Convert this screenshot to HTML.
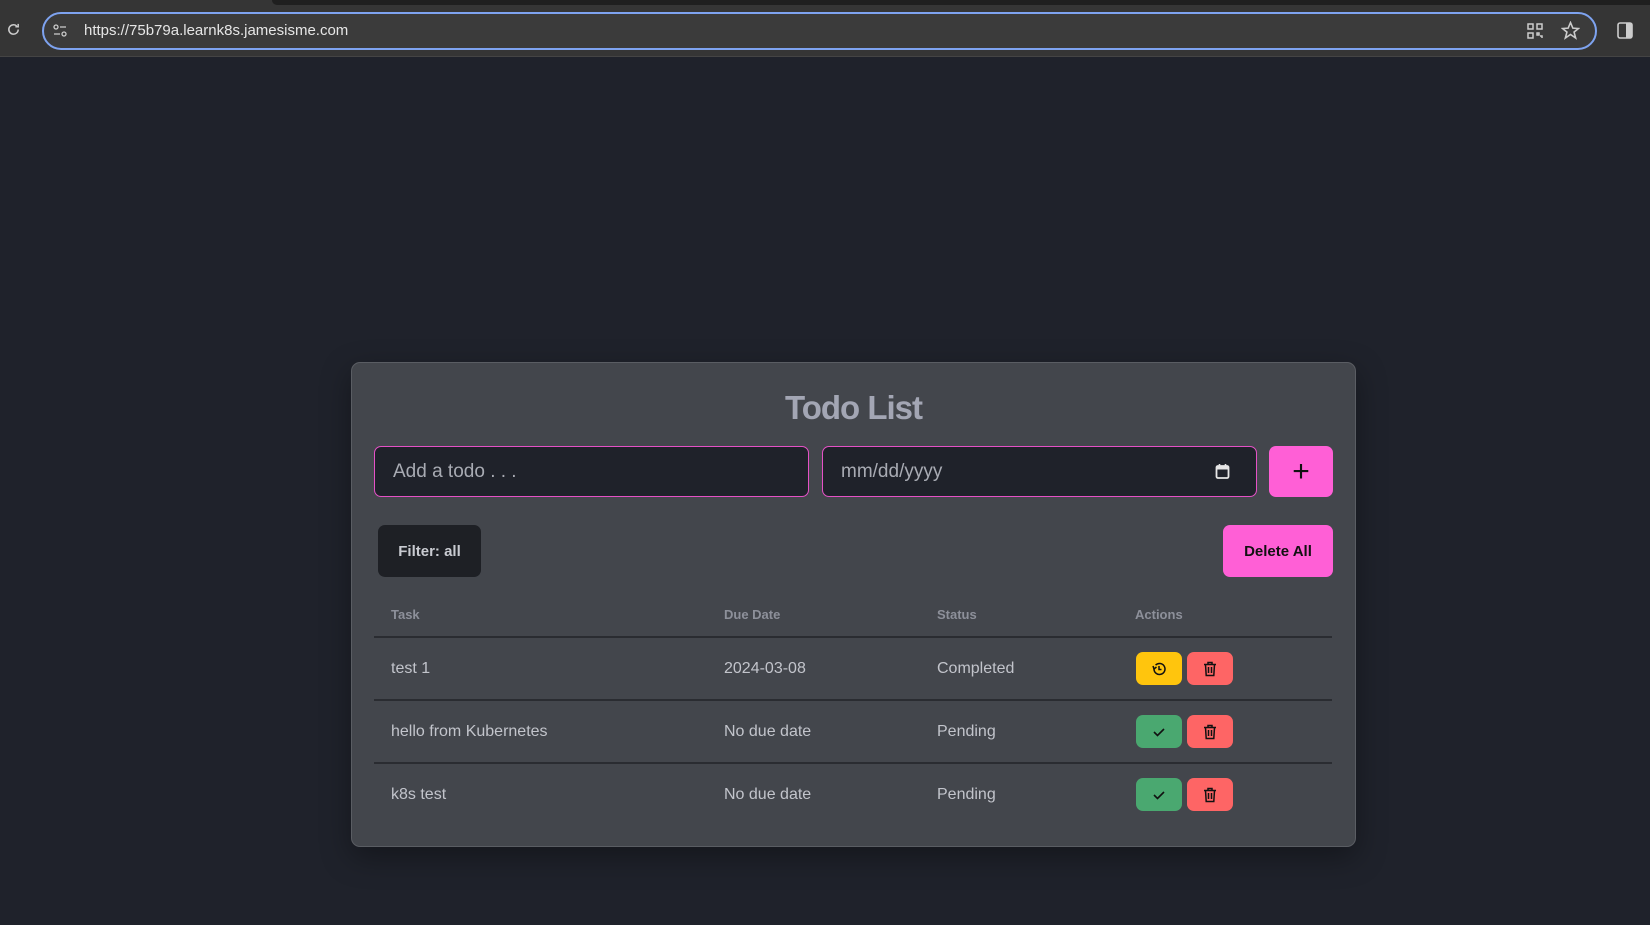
<!DOCTYPE html>
<html><head><style>
*{box-sizing:border-box;margin:0;padding:0}
body{width:1650px;height:925px;background:#1f222b;font-family:"Liberation Sans",sans-serif;position:relative;overflow:hidden}
.top{position:absolute;left:0;top:0;width:1650px;height:57px;background:#353535;border-bottom:1px solid #444}
.tab{position:absolute;left:272px;top:0;width:1378px;height:5px;background:#1f1f1f;border-bottom-left-radius:6px}
.url{position:absolute;left:42px;top:12px;width:1555px;height:38px;border:2px solid #7ea3f0;border-radius:19px;background:#3b3b3b;color:#e6e6e6;font-size:15px;line-height:34px;padding-left:40px}
.card{position:absolute;left:351px;top:362px;width:1005px;height:485px;background:#43464c;border:1px solid #5a5d63;border-radius:9px;box-shadow:0 10px 30px rgba(0,0,0,.35)}
h1{position:absolute;left:351px;width:1005px;top:389px;text-align:center;color:#a3a6b4;font-size:33px;font-weight:bold;letter-spacing:-1px}
.in{position:absolute;top:446px;height:51px;border:1.5px solid #e551c6;border-radius:7px;background:#1f222a;color:#a8abb3;font-size:19px;line-height:50px;padding-left:18px}
.btn{position:absolute;border-radius:7px;font-weight:bold;font-size:15px;display:flex;align-items:center;justify-content:center}
.pink{background:#ff5fd6;color:#111}
.th{position:absolute;top:607px;font-size:13px;font-weight:bold;color:#8d909a}
.td{position:absolute;font-size:16px;color:#c2c4cb}
.line{position:absolute;left:374px;width:958px;height:2px;background:#2a2c31}
.ab{position:absolute;width:46px;height:33px;border-radius:7px;display:flex;align-items:center;justify-content:center}
</style></head><body>
<div class="top"><div class="tab"></div>
<svg style="position:absolute;left:6px;top:22px" width="15" height="15" viewBox="0 0 16 16"><path d="M13 8a5 5 0 1 1-1.5-3.6M13 2v3h-3" fill="none" stroke="#ccc" stroke-width="1.6"/></svg>
<div class="url">https://75b79a.learnk8s.jamesisme.com</div>
<svg style="position:absolute;left:53px;top:24px" width="14" height="14" viewBox="0 0 14 14"><circle cx="3" cy="3" r="2" fill="none" stroke="#ccc" stroke-width="1.3"/><path d="M7 3h6M1 10h6" stroke="#ccc" stroke-width="1.3"/><circle cx="11" cy="10" r="2" fill="none" stroke="#ccc" stroke-width="1.3"/></svg>
<svg style="position:absolute;left:1527px;top:23px" width="16" height="16" viewBox="0 0 16 16" fill="none" stroke="#ccc" stroke-width="1.5"><rect x="1" y="1" width="5" height="5"/><rect x="10" y="1" width="5" height="5"/><rect x="1" y="10" width="5" height="5"/><path d="M10 10h2v2h-2zM13 13h2v2"/></svg>
<svg style="position:absolute;left:1561px;top:21px" width="19" height="19" viewBox="0 0 24 24"><path d="M12 2l3 7 7 .5-5.5 4.5 2 7.5L12 17l-6.5 4.5 2-7.5L2 9.5 9 9z" fill="none" stroke="#ccc" stroke-width="2"/></svg>
<svg style="position:absolute;left:1617px;top:22px" width="16" height="17" viewBox="0 0 16 17"><rect x="1" y="1" width="14" height="15" rx="2" fill="none" stroke="#ccc" stroke-width="1.6"/><rect x="9" y="1" width="6" height="15" fill="#ccc"/></svg>
</div>
<div class="card"></div>
<h1>Todo List</h1>
<div class="in" style="left:374px;width:435px">Add a todo . . .</div>
<div class="in" style="left:822px;width:435px">mm/dd/yyyy
<svg style="position:absolute;right:26px;top:16px" width="15" height="16" viewBox="0 0 15 16"><rect x="1.5" y="3" width="12" height="12" rx="1.5" fill="none" stroke="#e6e6e6" stroke-width="1.8"/><rect x="1.5" y="3" width="12" height="3.5" fill="#e6e6e6"/><path d="M4.5 1v3M10.5 1v3" stroke="#e6e6e6" stroke-width="1.6"/></svg></div>
<div class="btn pink" style="left:1269px;top:446px;width:64px;height:51px;font-size:30px;font-weight:normal">+</div>
<div class="btn" style="left:378px;top:525px;width:103px;height:52px;background:#1e2025;color:#c9cbd1">Filter: all</div>
<div class="btn pink" style="left:1223px;top:525px;width:110px;height:52px">Delete All</div>
<div class="th" style="left:391px">Task</div><div class="th" style="left:724px">Due Date</div><div class="th" style="left:937px">Status</div><div class="th" style="left:1135px">Actions</div>
<div class="line" style="top:636px"></div><div class="line" style="top:699px"></div><div class="line" style="top:762px"></div>
<div class="td" style="left:391px;top:660px">test 1</div><div class="td" style="left:724px;top:660px">2024-03-08</div><div class="td" style="left:937px;top:660px">Completed</div>
<div class="td" style="left:391px;top:723px">hello from Kubernetes</div><div class="td" style="left:724px;top:723px">No due date</div><div class="td" style="left:937px;top:723px">Pending</div>
<div class="td" style="left:391px;top:786px">k8s test</div><div class="td" style="left:724px;top:786px">No due date</div><div class="td" style="left:937px;top:786px">Pending</div>
<div class="ab" style="left:1136px;top:652px;background:#ffc50d"><svg width="16" height="16" viewBox="0 0 16 16" fill="none" stroke="#111" stroke-width="1.5"><path d="M3 8a5.5 5.5 0 1 0 1.6-3.9"/><path d="M2 5l1 3 2.5-2"/><path d="M8 5v3.5h2.5"/></svg></div>
<div class="ab" style="left:1187px;top:652px;background:#fe6565"><svg width="14" height="16" viewBox="0 0 14 16" fill="none" stroke="#111" stroke-width="1.5"><path d="M1 3.5h12M5 3.5V1.5h4v2M2.5 3.5l.7 11h7.6l.7-11M5.5 6v6M8.5 6v6"/></svg></div>
<div class="ab" style="left:1136px;top:715px;background:#4aa870"><svg width="14" height="12" viewBox="0 0 14 12"><path d="M2 6l3.5 3.5L12 3" fill="none" stroke="#111" stroke-width="1.6"/></svg></div>
<div class="ab" style="left:1187px;top:715px;background:#fe6565"><svg width="14" height="16" viewBox="0 0 14 16" fill="none" stroke="#111" stroke-width="1.5"><path d="M1 3.5h12M5 3.5V1.5h4v2M2.5 3.5l.7 11h7.6l.7-11M5.5 6v6M8.5 6v6"/></svg></div>
<div class="ab" style="left:1136px;top:778px;background:#4aa870"><svg width="14" height="12" viewBox="0 0 14 12"><path d="M2 6l3.5 3.5L12 3" fill="none" stroke="#111" stroke-width="1.6"/></svg></div>
<div class="ab" style="left:1187px;top:778px;background:#fe6565"><svg width="14" height="16" viewBox="0 0 14 16" fill="none" stroke="#111" stroke-width="1.5"><path d="M1 3.5h12M5 3.5V1.5h4v2M2.5 3.5l.7 11h7.6l.7-11M5.5 6v6M8.5 6v6"/></svg></div>
</body></html>
